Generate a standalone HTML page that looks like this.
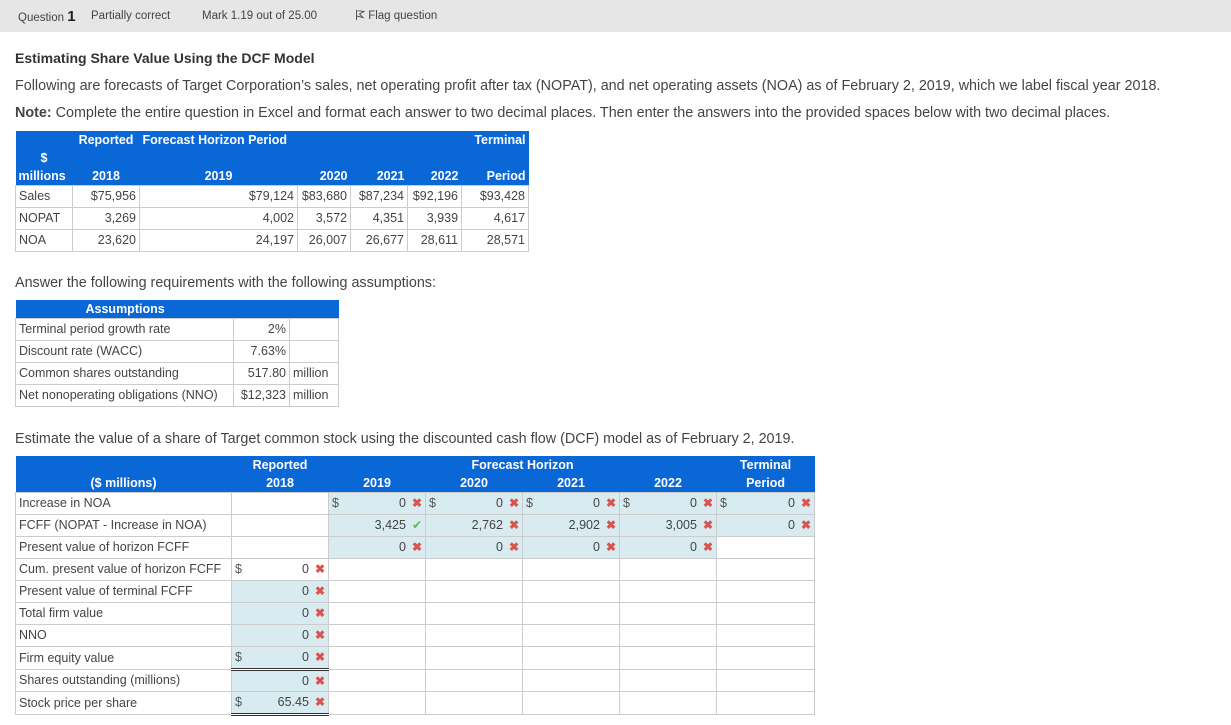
<!DOCTYPE html>
<html><head><meta charset="utf-8">
<style>
*{margin:0;padding:0;box-sizing:border-box}
body{width:1231px;height:725px;background:#fff;font-family:"Liberation Sans",sans-serif;color:#333;position:relative;overflow:hidden}
.a{position:absolute;white-space:nowrap}
.bar{position:absolute;left:0;top:0;width:1231px;height:32px;background:#e6e6e6}
table{position:absolute;border-collapse:collapse;table-layout:fixed;font-size:12.5px;color:#444}
td{border:1px solid #ccc;padding:0 3px;height:22px;white-space:nowrap;overflow:hidden}
.h td{background:#0a67d6;color:#fff;font-weight:bold;border:none;height:18px}
.r{text-align:right}
.lb{background:#d7ebf0}
.x{color:#d9534f;font-size:12px;margin-left:6px;font-weight:bold}
.ok{color:#5cb85c;font-size:12px;margin-left:6px}
.d{float:left;color:#555}
.c{text-align:center}
</style></head><body>
<div class="bar"></div>
<div class="a" style="left:18px;top:8px;font-size:11.5px;color:#444">Question <b style="font-size:15px;color:#222">1</b></div>
<div class="a" style="left:91px;top:10px;font-size:11.5px;color:#444">Partially correct</div>
<div class="a" style="left:202px;top:10px;font-size:11.5px;color:#444">Mark 1.19 out of 25.00</div>
<div class="a" style="left:355px;top:9px;font-size:11.5px;color:#444"><svg width="10" height="12" viewBox="0 0 10 12" style="vertical-align:-2px"><path d="M1.5 1v10M1.5 1.5L9 2.5 4.5 5 8 8.5 1.5 7" fill="none" stroke="#555" stroke-width="1"/></svg> Flag question</div>

<div class="a" style="left:15px;top:50px;font-size:14px;font-weight:bold;color:#333">Estimating Share Value Using the DCF Model</div>
<div class="a" style="left:15px;top:78px;font-size:14.35px;color:#444">Following are forecasts of Target Corporation’s sales, net operating profit after tax (NOPAT), and net operating assets (NOA) as of February 2, 2019, which we label fiscal year 2018.</div>
<div class="a" style="left:15px;top:105px;font-size:14.35px;color:#444"><b>Note:</b> Complete the entire question in Excel and format each answer to two decimal places. Then enter the answers into the provided spaces below with two decimal places.</div>

<table style="left:15px;top:131px;width:513px">
<colgroup><col style="width:57px"><col style="width:67px"><col style="width:158px"><col style="width:53px"><col style="width:57px"><col style="width:54px"><col style="width:67px"></colgroup>
<tr class="h"><td></td><td class="c">Reported</td><td colspan="2">Forecast Horizon Period</td><td></td><td></td><td class="r">Terminal</td></tr>
<tr class="h"><td class="c">$</td><td></td><td></td><td></td><td></td><td></td><td></td></tr>
<tr class="h"><td>millions</td><td class="c">2018</td><td class="c">2019</td><td class="r">2020</td><td class="r">2021</td><td class="r">2022</td><td class="r">Period</td></tr>
<tr><td>Sales</td><td class="r">$75,956</td><td class="r">$79,124</td><td class="r">$83,680</td><td class="r">$87,234</td><td class="r">$92,196</td><td class="r">$93,428</td></tr>
<tr><td>NOPAT</td><td class="r">3,269</td><td class="r">4,002</td><td class="r">3,572</td><td class="r">4,351</td><td class="r">3,939</td><td class="r">4,617</td></tr>
<tr><td>NOA</td><td class="r">23,620</td><td class="r">24,197</td><td class="r">26,007</td><td class="r">26,677</td><td class="r">28,611</td><td class="r">28,571</td></tr>
</table>

<div class="a" style="left:15px;top:275px;font-size:14.35px;color:#444">Answer the following requirements with the following assumptions:</div>
<table style="left:15px;top:300px;width:323px">
<colgroup><col style="width:218px"><col style="width:56px"><col style="width:49px"></colgroup>
<tr class="h"><td colspan="3" style="padding-left:70px">Assumptions</td></tr>
<tr><td>Terminal period growth rate</td><td class="r">2%</td><td></td></tr>
<tr><td>Discount rate (WACC)</td><td class="r">7.63%</td><td></td></tr>
<tr><td>Common shares outstanding</td><td class="r">517.80</td><td>million</td></tr>
<tr><td>Net nonoperating obligations (NNO)</td><td class="r">$12,323</td><td>million</td></tr>
</table>

<div class="a" style="left:15px;top:431px;font-size:14.35px;color:#444">Estimate the value of a share of Target common stock using the discounted cash flow (DCF) model as of February 2, 2019.</div>
<table style="left:15px;top:456px;width:799px">
<colgroup><col style="width:216px"><col style="width:97px"><col style="width:97px"><col style="width:97px"><col style="width:97px"><col style="width:97px"><col style="width:98px"></colgroup>
<tr class="h"><td></td><td class="c">Reported</td><td></td><td colspan="2" class="c">Forecast Horizon</td><td></td><td class="c">Terminal</td></tr>
<tr class="h"><td class="c">($ millions)</td><td class="c">2018</td><td class="c">2019</td><td class="c">2020</td><td class="c">2021</td><td class="c">2022</td><td class="c">Period</td></tr>
<tr><td>Increase in NOA</td><td></td><td class="r lb"><span class="d">$</span>0<span class="x">✖</span></td><td class="r lb"><span class="d">$</span>0<span class="x">✖</span></td><td class="r lb"><span class="d">$</span>0<span class="x">✖</span></td><td class="r lb"><span class="d">$</span>0<span class="x">✖</span></td><td class="r lb"><span class="d">$</span>0<span class="x">✖</span></td></tr>
<tr><td>FCFF (NOPAT - Increase in NOA)</td><td></td><td class="r lb">3,425<span class="ok">✔</span></td><td class="r lb">2,762<span class="x">✖</span></td><td class="r lb">2,902<span class="x">✖</span></td><td class="r lb">3,005<span class="x">✖</span></td><td class="r lb">0<span class="x">✖</span></td></tr>
<tr><td>Present value of horizon FCFF</td><td></td><td class="r lb">0<span class="x">✖</span></td><td class="r lb">0<span class="x">✖</span></td><td class="r lb">0<span class="x">✖</span></td><td class="r lb">0<span class="x">✖</span></td><td></td></tr>
<tr><td>Cum. present value of horizon FCFF</td><td class="r lb" style="background:#fff"><span class="d">$</span>0<span class="x">✖</span></td><td></td><td></td><td></td><td></td><td></td></tr>
<tr><td>Present value of terminal FCFF</td><td class="r lb">0<span class="x">✖</span></td><td></td><td></td><td></td><td></td><td></td></tr>
<tr><td>Total firm value</td><td class="r lb" style="border-top:1px solid #222">0<span class="x">✖</span></td><td></td><td></td><td></td><td></td><td></td></tr>
<tr><td>NNO</td><td class="r lb">0<span class="x">✖</span></td><td></td><td></td><td></td><td></td><td></td></tr>
<tr><td style="height:23px">Firm equity value</td><td class="r lb" style="border-bottom:3px double #333"><span class="d">$</span>0<span class="x">✖</span></td><td></td><td></td><td></td><td></td><td></td></tr>
<tr><td>Shares outstanding (millions)</td><td class="r lb">0<span class="x">✖</span></td><td></td><td></td><td></td><td></td><td></td></tr>
<tr><td style="height:23px">Stock price per share</td><td class="r lb" style="border-bottom:3px double #333"><span class="d">$</span>65.45<span class="x">✖</span></td><td></td><td></td><td></td><td></td><td></td></tr>
</table>
</body></html>
